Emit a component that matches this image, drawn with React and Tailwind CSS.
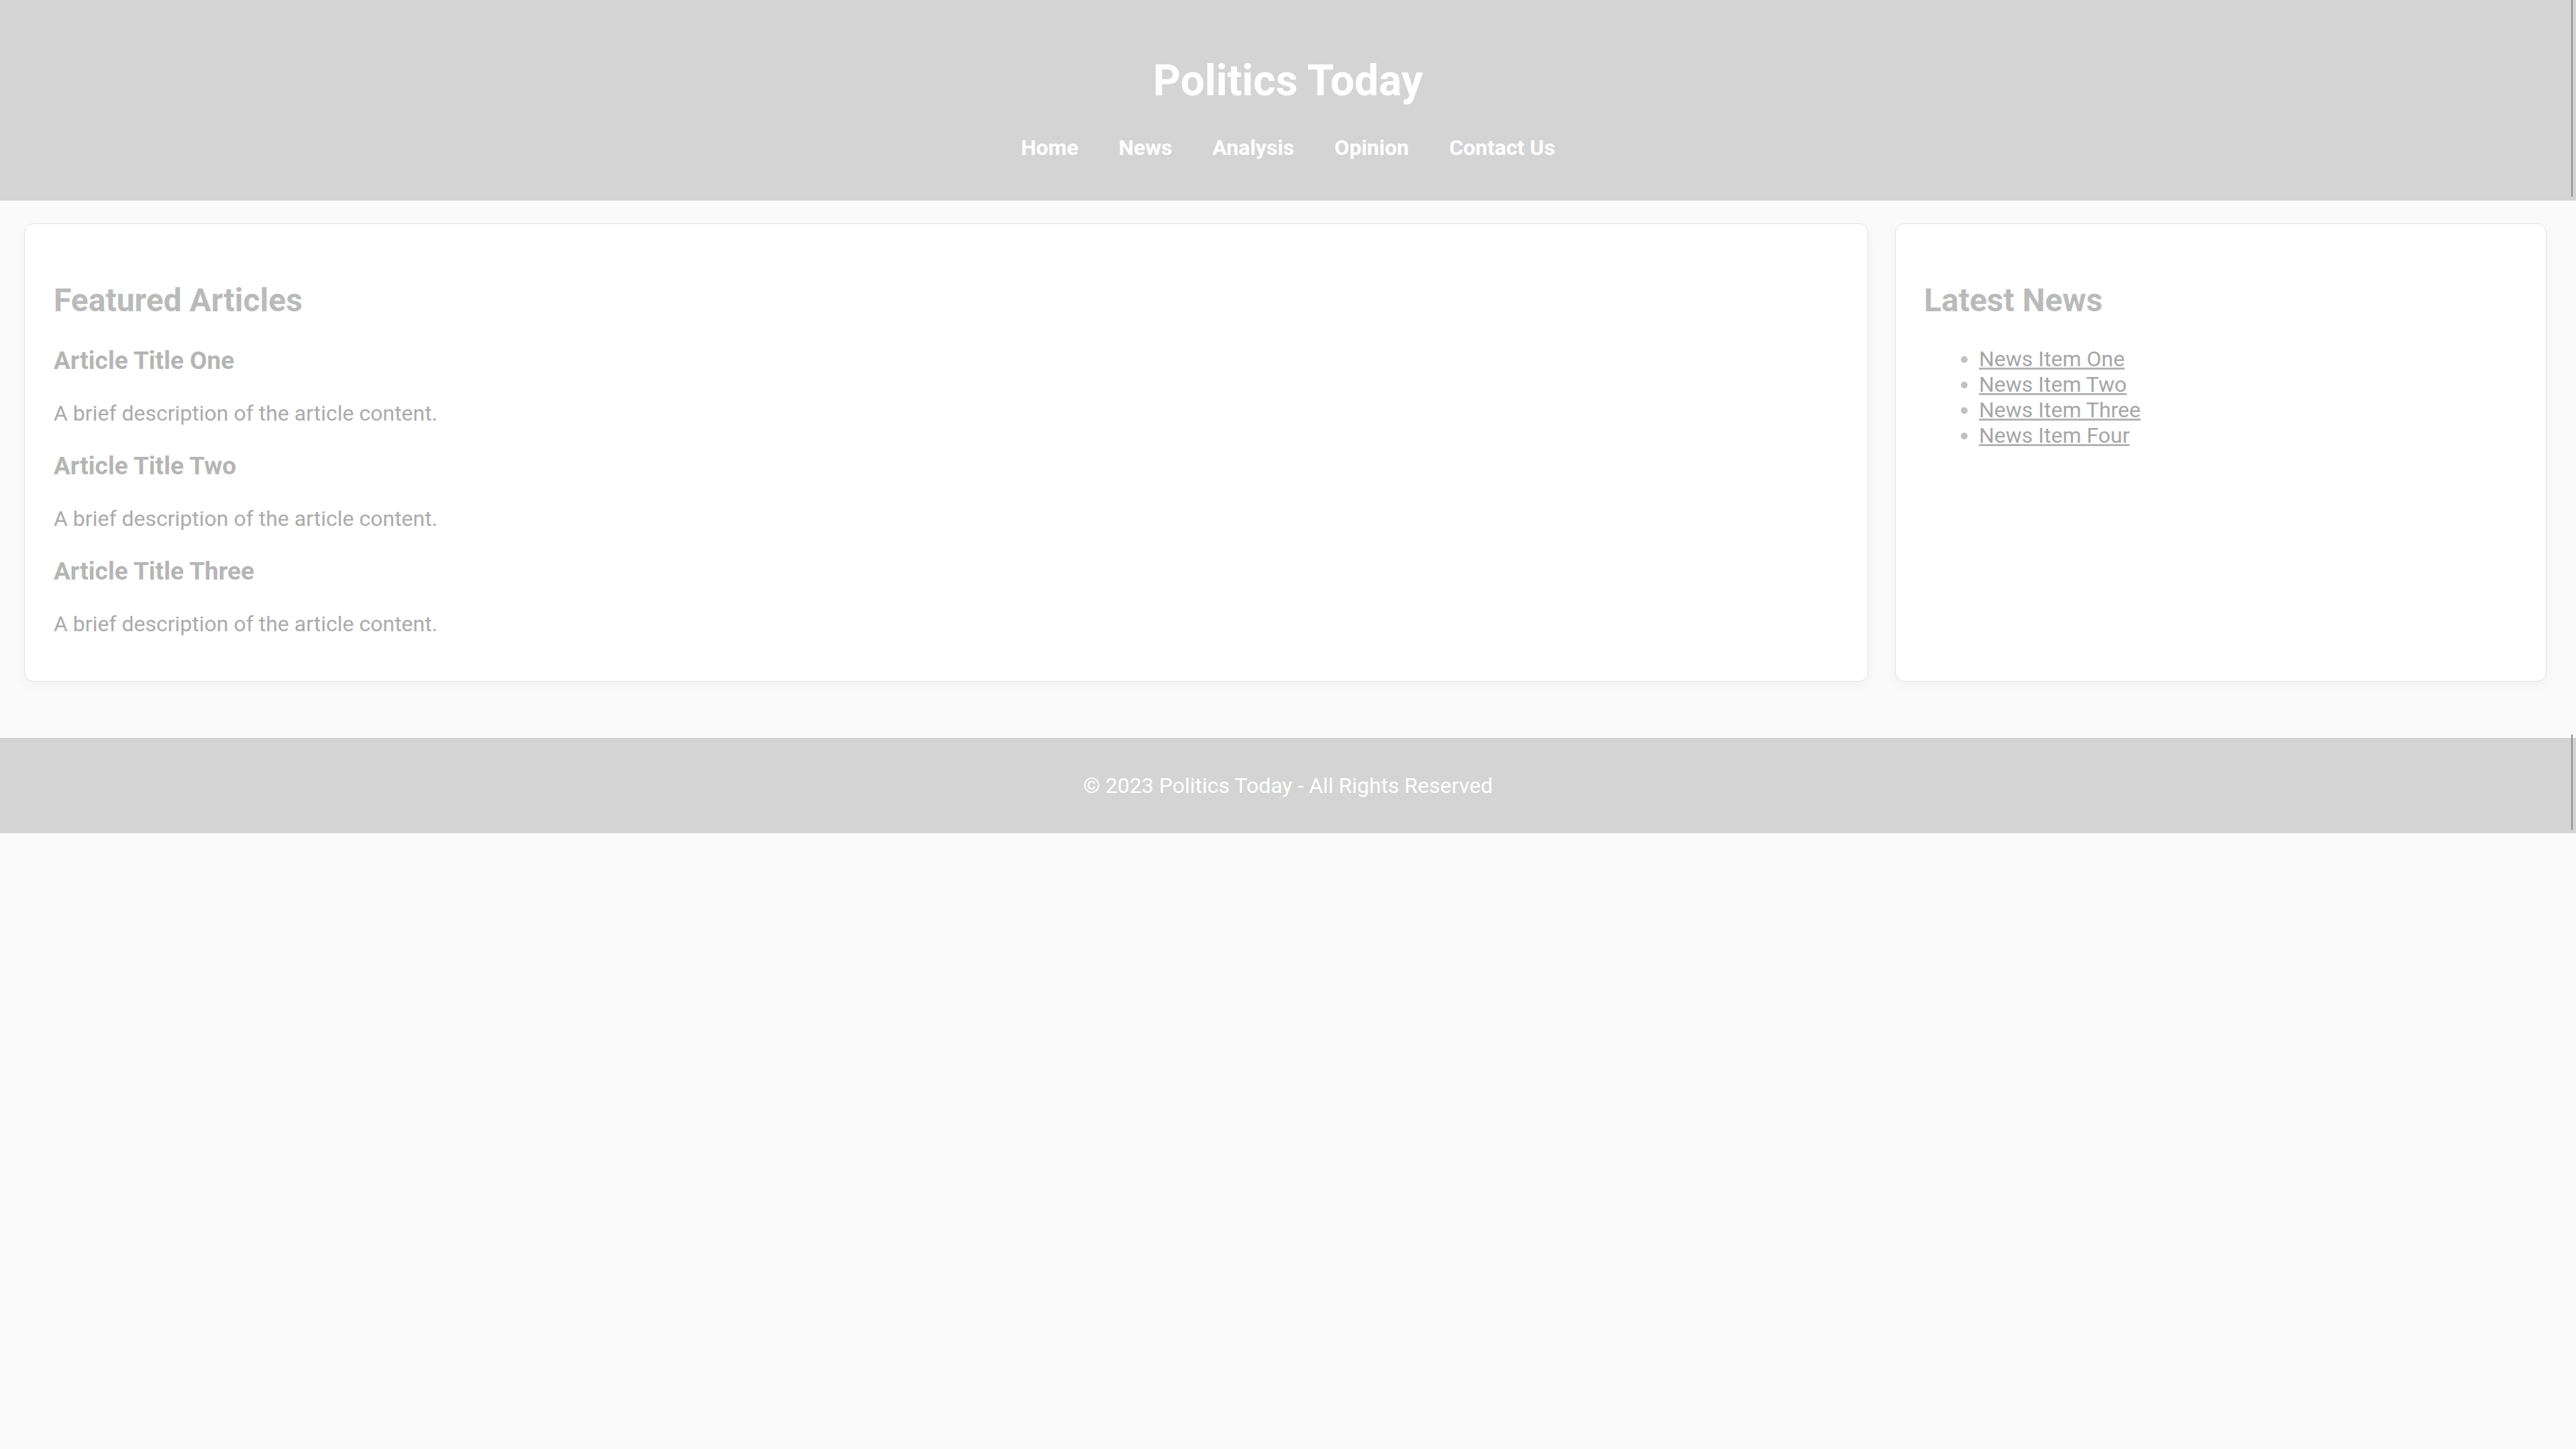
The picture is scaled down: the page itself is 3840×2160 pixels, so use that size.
export default function App() {
  const navLinks = ['Home', 'News', 'Analysis', 'Opinion', 'Contact Us'];
  const articles = ['Article Title One', 'Article Title Two', 'Article Title Three'];
  const newsItems = ['News Item One', 'News Item Two', 'News Item Three', 'News Item Four'];

  return (
    <div className="min-h-screen bg-[#fafafa] font-['Roboto','Liberation_Sans',sans-serif]">
      {/* Header */}
      <header className="relative bg-[#d4d4d4] pt-[83px] pb-[60px] text-center text-white">
        <h1 className="text-[64px] leading-[75px] font-bold">Politics Today</h1>
        <nav className="mt-[43px] flex justify-center gap-[60px] text-[32px] leading-[38px] font-bold">
          {navLinks.map((l) => (
            <a key={l} href="#">
              {l}
            </a>
          ))}
        </nav>
        <span className="absolute right-[5px] top-0 h-[293px] w-[2px] bg-[#8a8a8a]" />
      </header>

      {/* Main */}
      <main className="flex gap-[40px] pl-[36px] pr-[44px] pt-[34px] pb-[84px]">
        <section className="w-[2749px] rounded-[14px] border border-[#e3e3e3] bg-white pl-[43px] pr-[40px] pt-[86px] pb-[66px] shadow-[0_6px_16px_rgba(0,0,0,0.04)]">
          <h2 className="text-[48px] leading-[56px] font-bold text-[#bababa]">Featured Articles</h2>
          <div className="mt-[40px] flex flex-col gap-[38px]">
            {articles.map((a) => (
              <article key={a} className="flex flex-col gap-[38px]">
                <h3 className="text-[37px] leading-[43px] font-bold text-[#b5b5b5]">{a}</h3>
                <p className="text-[32px] leading-[38px] text-[#ababab]">
                  A brief description of the article content.
                </p>
              </article>
            ))}
          </div>
        </section>

        <aside className="w-[971px] rounded-[14px] border border-[#e3e3e3] bg-white pl-[42px] pr-[40px] pt-[86px] pb-[66px] shadow-[0_6px_16px_rgba(0,0,0,0.04)]">
          <h2 className="text-[48px] leading-[56px] font-bold text-[#bababa]">Latest News</h2>
          <ul className="mt-[40px] list-disc pl-[82px] text-[32px] leading-[38px] text-[#c0c0c0]">
            {newsItems.map((n) => (
              <li key={n}>
                <a href="#" className="text-[#a6a6a6] underline decoration-[#b3b3b3]">
                  {n}
                </a>
              </li>
            ))}
          </ul>
        </aside>
      </main>

      {/* Footer */}
      <footer className="relative bg-[#d4d4d4] py-[52px] text-center text-[32px] leading-[38px] text-white">
        <p>© 2023 Politics Today - All Rights Reserved</p>
        <span className="absolute right-[5px] top-[-5px] h-[142px] w-[2px] bg-[#8a8a8a]" />
      </footer>
    </div>
  );
}
